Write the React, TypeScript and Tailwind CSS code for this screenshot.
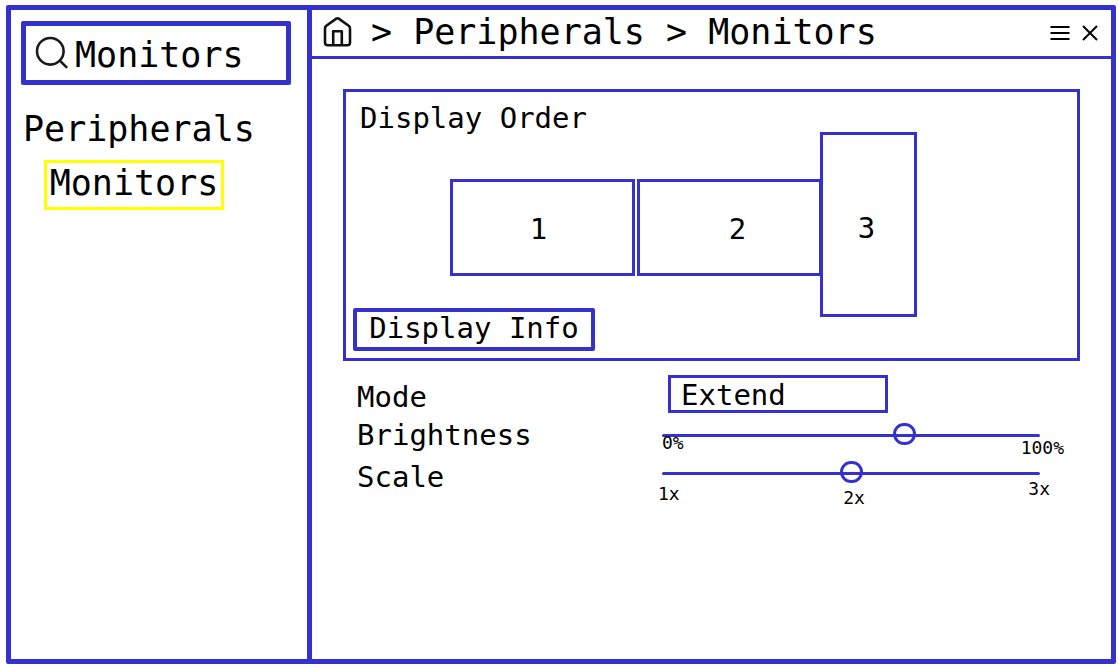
import { useState } from "react";

function HomeIcon() {
  return (
    <svg width="29" height="32" viewBox="0 0 29 32" fill="none" stroke="#111" strokeWidth="2.6" strokeLinejoin="round" aria-hidden="true">
      <path d="M2 12.4Q2 10.8 3.3 9.8L13.3 2.6Q14.5 1.8 15.7 2.6L25.7 9.8Q27 10.8 27 12.4V26.4Q27 29.2 24.2 29.2H4.8Q2 29.2 2 26.4Z" />
      <path d="M10.2 29V15.2H18.8V29" />
    </svg>
  );
}

function SearchIcon() {
  return (
    <svg width="34" height="34" viewBox="0 0 34 34" fill="none" stroke="#1a1a1a" strokeWidth="2.6" strokeLinecap="round" className="shrink-0" aria-hidden="true">
      <circle cx="15.3" cy="15.3" r="13.3" />
      <path d="M24.8 24.6L31.4 31.2" />
    </svg>
  );
}

function MenuIcon() {
  return (
    <svg width="20" height="16" viewBox="0 0 20 16" stroke="#000" strokeWidth="2" aria-hidden="true">
      <path d="M0.5 2H19.5M0.5 8H19.5M0.5 14H19.5" />
    </svg>
  );
}

function CloseIcon() {
  return (
    <svg width="16" height="16" viewBox="0 0 16 16" stroke="#000" strokeWidth="2" aria-hidden="true">
      <path d="M1 1L15 15M15 1L1 15" />
    </svg>
  );
}

const sliderClass =
  "block h-[22px] w-full cursor-pointer appearance-none bg-transparent [&::-webkit-slider-runnable-track]:h-[3px] [&::-webkit-slider-runnable-track]:rounded-full [&::-webkit-slider-runnable-track]:bg-[#3431cf] [&::-webkit-slider-thumb]:-mt-[11px] [&::-webkit-slider-thumb]:h-[22px] [&::-webkit-slider-thumb]:w-[23px] [&::-webkit-slider-thumb]:appearance-none [&::-webkit-slider-thumb]:rounded-full [&::-webkit-slider-thumb]:border-3 [&::-webkit-slider-thumb]:border-[#3431cf] [&::-webkit-slider-thumb]:bg-transparent";

export default function App() {
  const [query, setQuery] = useState("Monitors");
  const [mode, setMode] = useState("Extend");
  const [brightness, setBrightness] = useState(65);
  const [scale, setScale] = useState(2);

  return (
    <div className="flex min-h-screen bg-white pt-[5px] pr-[3px] pb-[6px] pl-[6px] font-['DejaVu_Sans_Mono',monospace] text-black">
      <div className="flex flex-1 rounded-[2px] border-5 border-[#3431cf]">
        <aside className="w-[301px] shrink-0 border-r-5 border-[#3431cf] pt-[11px] pr-4 pl-[10px]">
          <label className="flex h-16 items-center gap-[6px] rounded-[2px] border-5 border-[#3431cf] pl-[9px]">
            <SearchIcon />
            <input
              type="text"
              aria-label="Search settings"
              value={query}
              onChange={(e) => setQuery(e.target.value)}
              className="w-full min-w-0 bg-transparent pt-1 text-[35px] leading-[44px] outline-none"
            />
          </label>
          <nav className="mt-[13px] pl-[2px] text-[35px]">
            <a href="#peripherals" className="block leading-[63px]">Peripherals</a>
            <a href="#monitors" className="-mt-px ml-[21px] flex h-[50px] w-[180px] items-center justify-center border-3 border-[#ffff00] pb-1">
              Monitors
            </a>
          </nav>
        </aside>

        <main className="min-w-0 flex-1">
          <header className="flex h-[49px] items-center justify-between border-b-3 border-[#3431cf] pr-[13px] pl-[11px]">
            <nav aria-label="Breadcrumb" className="flex items-center gap-[19px] text-[35px] leading-[42px] whitespace-pre">
              <a href="#home" aria-label="Home" className="pb-[2px]"><HomeIcon /></a>
              <span className="pb-[2px]">
                {"> "}<a href="#peripherals">Peripherals</a>{" > "}<a href="#monitors">Monitors</a>
              </span>
            </nav>
            <div className="flex items-center gap-3">
              <button type="button" aria-label="Menu"><MenuIcon /></button>
              <button type="button" aria-label="Close"><CloseIcon /></button>
            </div>
          </header>

          <div className="px-[31px] pt-[30px] text-[29px]">
            <section className="border-3 border-[#3431cf] pt-3 pb-[7px]">
              <h2 className="pl-[14px] leading-7">Display Order</h2>
              <div className="flex h-44 items-start justify-center pr-14">
                <button type="button" className="mt-[47px] mr-[2px] h-[97px] w-[185px] border-3 border-[#3431cf] pt-1 pr-2">1</button>
                <button type="button" className="mt-[47px] h-[97px] w-[185px] border-3 border-[#3431cf] pt-1 pl-4">2</button>
                <button type="button" className="-ml-[2px] h-[185px] w-[97px] border-3 border-[#3431cf] pt-2 pr-1">3</button>
              </div>
              <button type="button" className="ml-[7px] flex h-[43px] w-[242px] items-center justify-center rounded-[2px] border-4 border-[#3431cf] pb-[2px]">
                Display Info
              </button>
            </section>

            <form className="grid grid-cols-[305px_1fr] items-start pt-[14px] pr-4 pl-[14px]">
              <label htmlFor="mode" className="leading-[44px]">Mode</label>
              <div className="flex pl-[6px]">
                <select
                  id="mode"
                  value={mode}
                  onChange={(e) => setMode(e.target.value)}
                  className="h-[38px] w-[220px] appearance-none border-3 border-[#3431cf] bg-white pt-[2px] pl-[10px] leading-[30px]"
                >
                  <option>Extend</option>
                  <option>Mirror</option>
                </select>
              </div>

              <label htmlFor="brightness" className="leading-8">Brightness</label>
              <div className="pt-[5px]">
                <div className="pr-6">
                  <input id="brightness" type="range" min={0} max={100} value={brightness} onChange={(e) => setBrightness(Number(e.target.value))} className={sliderClass} />
                </div>
                <div className="pointer-events-none -mt-[11px] flex h-[21px] justify-between text-lg leading-4">
                  <span className="self-start">0%</span>
                  <span className="self-end">100%</span>
                </div>
              </div>

              <label htmlFor="scale" className="leading-[42px]">Scale</label>
              <div className="pt-[6px]">
                <div className="pr-6">
                  <input id="scale" type="range" min={1} max={3} step={0.5} value={scale} onChange={(e) => setScale(Number(e.target.value))} className={sliderClass} />
                </div>
                <div className="pointer-events-none -mt-[3px] mr-[14px] -ml-1 flex h-[25px] justify-between text-lg leading-4">
                  <span className="self-center">1x</span>
                  <span className="self-end">2x</span>
                  <span className="self-start">3x</span>
                </div>
              </div>
            </form>
          </div>
        </main>
      </div>
    </div>
  );
}
